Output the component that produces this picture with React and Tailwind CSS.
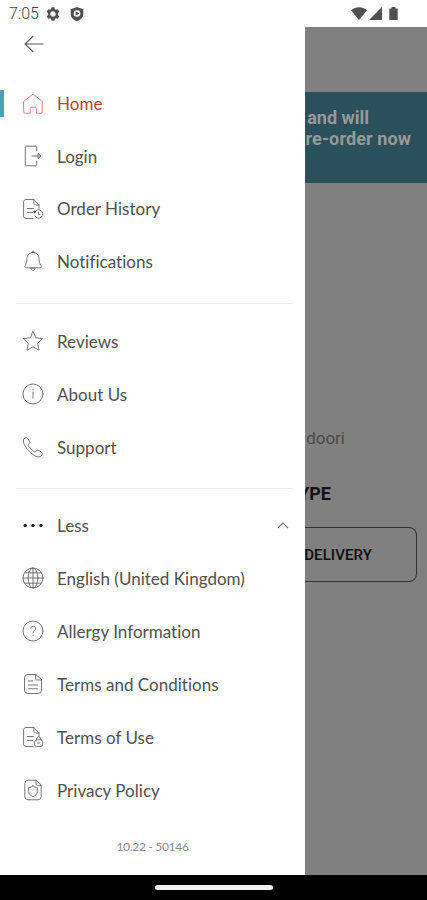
const iconProps = {
    viewBox: '0 0 24 24',
    fill: 'none',
    strokeWidth: 0.9,
    strokeLinecap: 'round',
    strokeLinejoin: 'round',
    className: 'w-6 h-6 shrink-0',
};

const ICONS = {
    home: <path d="M2.8 9.4 12 2l9.2 7.4V20a1.2 1.2 0 0 1-1.2 1.2h-4.6v-4.6a1.4 1.4 0 0 0-1.4-1.4h-3.4a1.4 1.4 0 0 0-1.4 1.4v4.6H4A1.2 1.2 0 0 1 2.8 20z" />,
    login: (
        <>
            <path d="M15.7 7V3.2a1 1 0 0 0-1-1H5.3a1 1 0 0 0-1 1v17.6a1 1 0 0 0 1 1h9.4a1 1 0 0 0 1-1V17" />
            <path d="M11 12h8.6M17.4 9.5 20 12l-2.600 2.500z" />
        </>
    ),
    history: (
        <>
            <path d="M12 21.500H5a2.400 2.400 0 0 1-2.400-2.400V4.900A2.400 2.400 0 0 1 5 2.500h7.800L18 8v3.500M12.800 2.500v4A1.500 1.500 0 0 0 14.300 8H18" />
            <path d="M6.500 11.500h6M6.500 15.500h5" />
            <path d="M13.600 15.500a4.200 4.200 0 1 1 .3 3.600" />
            <path d="M17.500 14.800v2.600h1.500" />
            <circle cx="13.600" cy="14.800" r=".8" fill="#333" stroke="#333" />
        </>
    ),
    bell: (
        <>
            <path d="M12 3.500c-3.800 0-5.800 2.700-6 6-.2 3.500-.7 5.300-1.800 7-.8 1.300-.4 2.300 1 2.300h13.600c1.400 0 1.800-1 1-2.300-1.100-1.700-1.600-3.500-1.800-7-.2-3.300-2.200-6-6-6z" />
            <path d="M10.600 3.500a1.400 1.400 0 0 1 2.800 0" />
            <path d="M9.800 19.500c.5 2.700 3.900 2.700 4.400 0z" />
        </>
    ),
    star: <path d="m12 2.600 2.900 6.200 6.800.8-5 4.700 1.300 6.900-6-3.400-6 3.400 1.300-6.900-5-4.700 6.800-.8z" />,
    info: (
        <>
            <circle cx="12" cy="12" r="10" />
            <path d="M12 10.200V16M12 7.500v.6" />
        </>
    ),
    phone: <path d="M3 3.900c1.500-1.700 3-1.600 4.100 0l1.300 2.200c.7 1.200.3 2-.6 2.900-.8.8-.6 1.600.2 2.700 1.200 1.700 2.500 3 4.300 4.300 1.100.8 1.900 1 2.700.2.900-.9 1.700-1.300 2.900-.6l2.200 1.300c1.600 1.100 1.700 2.600 0 4.100-2.300 2.100-6.700.5-11.600-4.300S1 6.200 3 3.900z" />,
    dots: (
        <g fill="#222" stroke="none">
            <circle cx="4.200" cy="12.500" r="1.700" />
            <circle cx="12" cy="12.500" r="1.700" />
            <circle cx="20" cy="12.500" r="1.700" />
        </g>
    ),
    globe: (
        <>
            <circle cx="12" cy="12" r="10" />
            <ellipse cx="12" cy="12" rx="4.800" ry="10" />
            <path d="M12 2v20M2 12h20M3.800 6.800h16.400M3.800 17.200h16.400" />
        </>
    ),
    help: (
        <>
            <circle cx="12" cy="12" r="10" />
            <path d="M9.600 9.500c0-3.100 4.900-3.100 4.900.1 0 2-2.500 2-2.500 4.300M12 16.300v.4" />
        </>
    ),
    terms: (
        <>
            <path d="M14.500 2.500H6.700a3.200 3.200 0 0 0-3.200 3.200v12.600a3.200 3.200 0 0 0 3.200 3.200h10.600a3.200 3.200 0 0 0 3.200-3.200V8zM14.500 2.500v4A1.500 1.500 0 0 0 16 8h4.500" />
            <path d="M7.500 9h4M7.500 13h9M7.500 16.800h9" />
        </>
    ),
    use: (
        <>
            <path d="M12 21.500H5a2.400 2.400 0 0 1-2.400-2.400V4.900A2.400 2.400 0 0 1 5 2.500h7.800L18 8v3.500M12.800 2.500v4A1.500 1.500 0 0 0 14.300 8H18" />
            <path d="M6.500 11.500h6M6.500 15.500h5" />
            <rect x="13.600" y="14.800" width="8" height="6.700" rx="2" />
            <path d="M15.500 14.800v-.7a2.100 2.100 0 0 1 4.200 0v.7M16.500 18h2.200" />
        </>
    ),
    privacy: (
        <>
            <path d="M15 2.200H7a3.200 3.200 0 0 0-3.200 3.200v13.200A3.200 3.200 0 0 0 7 21.800h10a3.200 3.200 0 0 0 3.200-3.200V7.400zM15 2.200v3.700a1.500 1.500 0 0 0 1.500 1.500h3.700" />
            <path d="M12 8c1.400 1.100 2.700 1.400 4.300 1.400v4.200c0 2.500-1.700 4-4.300 5-2.600-1-4.300-2.500-4.300-5V9.400c1.600 0 2.900-.3 4.300-1.400z" />
        </>
    ),
};

const MAIN = [
    { icon: 'home', label: 'Home', active: true },
    { icon: 'login', label: 'Login' },
    { icon: 'history', label: 'Order History' },
    { icon: 'bell', label: 'Notifications' },
];

const HELP = [
    { icon: 'star', label: 'Reviews' },
    { icon: 'info', label: 'About Us' },
    { icon: 'phone', label: 'Support' },
];

const MORE = [
    { icon: 'dots', label: 'Less', expanded: true },
    { icon: 'globe', label: 'English (United Kingdom)' },
    { icon: 'help', label: 'Allergy Information' },
    { icon: 'terms', label: 'Terms and Conditions' },
    { icon: 'use', label: 'Terms of Use' },
    { icon: 'privacy', label: 'Privacy Policy' },
];

function StatusBar() {
    return (
        <header className="h-[27px] shrink-0 flex items-center pl-[9px] pr-[29px] bg-white text-[#505050]">
            <span className="font-[Roboto] text-[16px] leading-none font-light text-[#444]">7:05</span>
            <svg viewBox="0 0 24 24" className="w-4 h-4 ml-[6px]" fill="currentColor">
                <path fillRule="evenodd" d="M9.700 2h4.600l.5 2.800 1.700 1 2.700-1 2.300 4-2.200 1.800v2.800l2.200 1.800-2.300 4-2.700-1-1.700 1-.5 2.800H9.700l-.5-2.800-1.700-1-2.700 1-2.300-4 2.200-1.800v-2.800L2.500 8.800l2.300-4 2.700 1 1.700-1zM12 8a4 4 0 1 0 0 8 4 4 0 0 0 0-8z" />
            </svg>
            <svg viewBox="0 0 24 24" className="w-4 h-4 ml-2" fill="currentColor">
                <path fillRule="evenodd" d="M12 1.500 21.500 5v7c0 5-4 9-9.500 11-5.500-2-9.500-6-9.500-11V5zM12 6.300a5 5 0 1 0 0 10 5 5 0 0 0 0-10zM10 7.800l5.500 3.500L10 14.800z" />
            </svg>
            <div className="ml-auto flex items-center">
                <svg viewBox="0 0 16 13" className="w-4 h-[13px] mr-px" fill="currentColor">
                    <path d="M0 3.300C4.500-.8 11.500-.8 16 3.300L8 13z" />
                </svg>
                <svg viewBox="0 0 13 13" className="w-[13px] h-[13px] ml-px" fill="currentColor">
                    <path d="M13 0v13H0z" />
                </svg>
                <svg viewBox="0 0 9 14" className="w-[9px] h-[13px] ml-[7px]" fill="currentColor">
                    <path d="M2.500 0h4v1.500H9V14H0V1.500h2.500z" />
                </svg>
            </div>
        </header>
    );
}

function MenuItem({ icon, label, active, expanded }) {
    return (
        <li className={`h-[53px] flex items-center ${active ? 'text-[#b5442f]' : 'text-[#505050]'}`}>
            <span className={`w-1 h-[27px] mr-[17px] ${active ? 'bg-[#4da3b5]' : ''}`} />
            <svg {...iconProps} stroke={active ? '#cf7772' : '#666'}>{ICONS[icon]}</svg>
            <span className="ml-3 text-[17px] leading-none tracking-[0.02px] whitespace-nowrap">{label}</span>
            {expanded && (
                <svg viewBox="0 0 12 7" className="w-3 h-[7px] ml-auto mr-4" fill="none" stroke="#777" strokeWidth="1.2">
                    <path d="m1 6 5-5 5 5" />
                </svg>
            )}
        </li>
    );
}

function MenuGroup({ items, className = '' }) {
    return <ul className={className}>{items.map((item) => <MenuItem key={item.label} {...item} />)}</ul>;
}

function Drawer() {
    return (
        <nav className="w-[305px] shrink-0 bg-white font-[Lato]">
            <div className="h-[50px] pt-[8px] pl-6">
                <svg viewBox="0 0 20 18" className="w-5 h-[18px]" fill="none" stroke="#555" strokeWidth="1.1">
                    <path d="M19.500 9H1M9.300 1 1 9l8.300 8" />
                </svg>
            </div>
            <MenuGroup items={MAIN} className="[&>li+li]:h-[52.6px]" />
            <div className="h-px bg-[#ebebeb] ml-4 mr-3 mt-[15.2px] mb-[11px]" />
            <MenuGroup items={HELP} />
            <div className="h-px bg-[#ebebeb] ml-4 mr-3 mt-[14px] mb-[10px]" />
            <MenuGroup items={MORE} />
            <p className="mt-[21px] text-center text-[12px] tracking-[-0.3px] text-[#8a8a8a]">10.22 - 50146</p>
        </nav>
    );
}

// The part of the order page left visible beside the open drawer
function DimmedPage() {
    return (
        <main className="flex-1 min-w-0 overflow-hidden bg-[#808080] font-[Roboto] whitespace-nowrap">
            <div className="h-[91px] mt-[65px] pt-[15px] bg-[#2a515b] text-[#999] font-bold text-[18px] leading-[21px]">
                <p className="flex justify-end pr-[58px]">and will</p>
                <p className="flex justify-end pr-[16px] tracking-[0.1px]">re-order now</p>
            </div>
            <p className="mt-[243px] flex justify-end pr-[82px] text-[17px] leading-6 text-[#4b4b4b]">doori</p>
            <h2 className="mt-[32px] flex justify-end pr-[96px] text-[18px] leading-6 font-bold text-[#111]">YPE</h2>
            <div className="mt-[21px] mr-[10px] h-[55px] pt-px flex items-center justify-end pr-[44px] border border-l-0 border-[#333] rounded-r-lg text-[15px] font-medium tracking-[0.1px] text-[#0c0c0c]">
                DELIVERY
            </div>
        </main>
    );
}

export default function App() {
    return (
        <div className="w-[427px] h-[900px] flex flex-col overflow-hidden bg-white">
            <StatusBar />
            <div className="h-[848px] flex">
                <Drawer />
                <DimmedPage />
            </div>
            <footer className="flex-1 flex justify-center bg-black pt-[10px]">
                <div className="w-[118px] h-[5px] rounded-full bg-[#eee]" />
            </footer>
        </div>
    );
}
